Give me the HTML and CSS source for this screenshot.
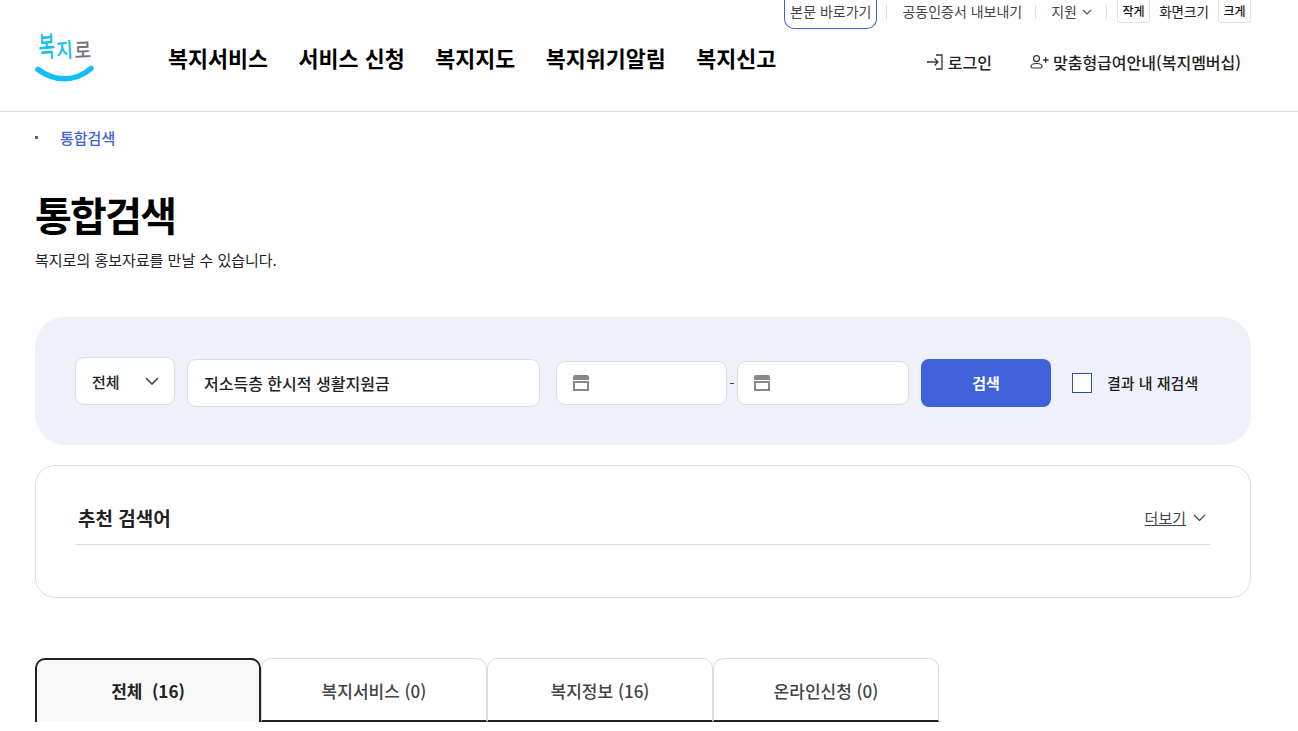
FILE: index.html
```html
<!DOCTYPE html>
<html lang="ko">
<head>
    <meta charset="utf-8">
    <title>통합검색 | 복지로</title>
    <link rel="stylesheet" href="styles.css">
</head>
<body>
<header class="site-header">
    <div class="util-bar">
        <a class="skip-link">본문 바로가기</a>
        <span class="util-sep"></span>
        <a class="util-link">공동인증서 내보내기</a>
        <span class="util-sep util-sep-wide"></span>
        <a class="util-link util-support">지원
            <svg width="10" height="6" viewBox="0 0 10 6"><path d="M1 1l4 4 4-4" fill="none" stroke="#555" stroke-width="1.2"/></svg>
        </a>
        <span class="util-sep util-sep-last"></span>
        <button class="size-btn">작게</button>
        <span class="size-label">화면크기</span>
        <button class="size-btn">크게</button>
    </div>
    <div class="main-bar">
        <a class="logo">
            <span class="logo-text"><span class="logo-bok">복</span><span class="logo-ji">지</span><span class="logo-ro">로</span></span>
            <svg class="logo-smile" width="60" height="18" viewBox="0 0 60 18"><path d="M3 4.500C20 17 40 17 56 3.500" fill="none" stroke="#14bdf2" stroke-width="5.500" stroke-linecap="round"/></svg>
        </a>
        <nav class="gnb">
            <a>복지서비스</a>
            <a>서비스 신청</a>
            <a>복지지도</a>
            <a>복지위기알림</a>
            <a>복지신고</a>
        </nav>
        <div class="member-links">
            <a class="member-link">
                <svg width="18" height="16" viewBox="0 0 18 16"><path d="M1 8h11M8.500 4.500L12 8l-3.500 3.500M10 1h6v14h-6" fill="none" stroke="#333" stroke-width="1.300"/></svg>
                로그인
            </a>
            <a class="member-link">
                <svg width="19" height="14" viewBox="0 0 19 14"><circle cx="6.500" cy="3.600" r="3" fill="none" stroke="#333" stroke-width="1.200"/><path d="M1 11.500c0-2 2.500-3 5.500-3s5.500 1 5.500 3c0 1-.7 1.500-1.500 1.500h-8C1.700 13 1 12.500 1 11.500z" fill="none" stroke="#333" stroke-width="1.200"/><path d="M13 5h5.500M15.700 2.300v5.500" stroke="#333" stroke-width="1.400"/></svg>
                맞춤형급여안내(복지멤버십)
            </a>
        </div>
    </div>
</header>

<main class="content">
    <div class="breadcrumb">
        <span class="crumb-dot"></span>
        <a class="crumb-current">통합검색</a>
    </div>

    <h1 class="page-title">통합검색</h1>
    <p class="page-desc">복지로의 홍보자료를 만날 수 있습니다.</p>

    <form class="search-panel">
        <div class="field field-select">
            <span>전체</span>
            <svg width="14" height="8" viewBox="0 0 14 8"><path d="M1 1l6 6 6-6" fill="none" stroke="#444" stroke-width="1.600"/></svg>
        </div>
        <div class="field field-keyword">저소득층 한시적 생활지원금</div>
        <div class="date-range">
            <div class="field field-date">
                <svg width="16" height="16" viewBox="0 0 16 16"><path d="M0 2a2 2 0 0 1 2-2h12a2 2 0 0 1 2 2v3H0z" fill="#888"/><rect x="1" y="7" width="14" height="8" fill="none" stroke="#888" stroke-width="2"/></svg>
            </div>
            <span class="date-dash">-</span>
            <div class="field field-date">
                <svg width="16" height="16" viewBox="0 0 16 16"><path d="M0 2a2 2 0 0 1 2-2h12a2 2 0 0 1 2 2v3H0z" fill="#888"/><rect x="1" y="7" width="14" height="8" fill="none" stroke="#888" stroke-width="2"/></svg>
            </div>
        </div>
        <button type="button" class="search-btn">검색</button>
        <label class="research">
            <span class="research-box"></span>
            결과 내 재검색
        </label>
    </form>

    <section class="recommend">
        <div class="recommend-head">
            <h2>추천 검색어</h2>
            <a class="more-link"><span>더보기</span>
                <svg width="13" height="8" viewBox="0 0 13 8"><path d="M1 1l5.500 5.500L12 1" fill="none" stroke="#444" stroke-width="1.200"/></svg>
            </a>
        </div>
    </section>

    <div class="tabs">
        <a class="tab tab-active">전체&nbsp; (16)</a>
        <a class="tab">복지서비스 (0)</a>
        <a class="tab">복지정보 (16)</a>
        <a class="tab">온라인신청 (0)</a>
    </div>
</main>
</body>
</html>
```

FILE: styles.css
```css
/* Page */
html, body {
    margin: 0;
    padding: 0;
    height: 731px;
    overflow: hidden;
    background-color: #fff;
}

body {
    font-family: "Noto Sans CJK KR", "Noto Sans", sans-serif;
    color: #111;
}

/* Header */
.site-header {
    height: 111px;
    border-bottom: 1px solid #ddd;
    box-sizing: content-box;
}

.util-bar {
    display: flex;
    justify-content: flex-end;
    align-items: flex-start;
    height: 29px;
    padding-right: 47px;
    font-size: 14px;
    line-height: 23px;
    color: #444;
}

.skip-link {
    width: 93px;
    height: 29px;
    box-sizing: border-box;
    border: 1px solid #3f62d9;
    border-top: none;
    border-radius: 0 0 10px 10px;
    text-align: center;
}

.util-sep {
    width: 1px;
    height: 14px;
    margin: 5px 15px 0 9px;
    background-color: #ddd;
}

.util-sep-wide {
    margin-left: 13px;
}

.util-sep-last {
    margin-left: 14px;
    margin-right: 10px;
}

.util-link {
    display: flex;
    align-items: center;
    height: 23px;
}

.util-support svg {
    margin-left: 5px;
}

.size-btn {
    width: 33px;
    height: 23px;
    margin: 0;
    padding: 0;
    border: 1px solid #e2e2e2;
    border-top: none;
    border-radius: 0 0 3px 3px;
    background-color: #fff;
    font-family: inherit;
    font-size: 12px;
    font-weight: 500;
    line-height: 22px;
    color: #111;
}

.size-label {
    width: 68px;
    font-size: 13.5px;
    text-align: center;
    color: #222;
}

.main-bar {
    display: flex;
    align-items: flex-start;
    height: 82px;
    padding: 0 47px 0 35px;
}

/* Logo */
.logo {
    position: relative;
    display: block;
    width: 133px;
    height: 60px;
    flex-shrink: 0;
}

.logo-text {
    position: absolute;
    top: 3px;
    left: 3px;
    display: flex;
    align-items: flex-end;
    height: 28px;
    font-size: 20px;
    line-height: 20px;
    white-space: nowrap;
}

.logo-bok,
.logo-ji,
.logo-ro {
    display: block;
    width: 18px;
    font-weight: 500;
    transform-origin: 50% 100%;
}

.logo-bok {
    color: #14bdf2;
    transform: scale(0.9, 1.45) rotate(-3deg);
}

.logo-ji {
    color: #14bdf2;
    transform: scale(0.9, 1.05) rotate(-4deg);
}

.logo-ro {
    color: #6f7480;
    transform: scale(0.9, 1.05) rotate(-2deg);
}

.logo-smile {
    position: absolute;
    top: 36px;
    left: 0;
}

/* Main nav */
.gnb {
    display: flex;
    gap: 30.5px;
    padding-top: 12px;
    font-size: 21.75px;
    line-height: 34px;
    font-weight: 700;
    color: #000;
}

.member-links {
    display: flex;
    gap: 38px;
    margin-left: auto;
    margin-right: 10px;
    padding-top: 20px;
    font-size: 16px;
    line-height: 26px;
    font-weight: 500;
    color: #222;
}

.member-link {
    display: flex;
    align-items: center;
    gap: 4px;
}

/* Content */
.content {
    padding: 0 47px 0 35px;
}

.breadcrumb {
    display: flex;
    align-items: center;
    height: 50px;
    font-size: 15px;
    font-weight: 500;
    color: #3f62d9;
}

.crumb-dot {
    width: 3px;
    height: 3px;
    margin-right: 22px;
    background-color: #666;
}

.page-title {
    margin: 22px 0 0;
    font-size: 40px;
    line-height: 60px;
    font-weight: 700;
    color: #000;
    letter-spacing: -1.7px;
}

.page-desc {
    margin: 4px 0 0;
    font-size: 15px;
    line-height: 24px;
    color: #222;
}

/* Search panel */
.search-panel {
    display: flex;
    align-items: center;
    height: 128px;
    margin-top: 45px;
    padding: 4px 40px 0;
    box-sizing: border-box;
    border-radius: 30px;
    background-color: #eef1fa;
}

.field {
    display: flex;
    align-items: center;
    box-sizing: border-box;
    border: 1px solid #ddd;
    border-radius: 9px;
    background-color: #fff;
    font-size: 15px;
    font-weight: 500;
    color: #222;
}

.field-select {
    justify-content: space-between;
    width: 100px;
    height: 48px;
    margin: 0 12px 4px 0;
    padding: 0 15px 0 16px;
}

.field-keyword {
    width: 353px;
    height: 48px;
    padding: 0 0 1px 16px;
    font-size: 16px;
}

.date-range {
    display: flex;
    align-items: center;
    margin-left: 16px;
}

.field-date {
    width: 171px;
    height: 44px;
    padding-left: 16px;
}

.date-range .field-date + .date-dash + .field-date {
    width: 172px;
}

.date-dash {
    width: 10px;
    font-size: 14px;
    color: #333;
    text-align: center;
}

.search-btn {
    width: 130px;
    height: 48px;
    margin: 0 0 0 12px;
    padding: 0 0 1px;
    border: none;
    border-radius: 8px;
    background-color: #3f62d9;
    font-family: inherit;
    font-size: 15px;
    font-weight: 700;
    color: #fff;
}

.research {
    display: flex;
    align-items: center;
    margin-left: 21px;
    font-size: 15px;
    font-weight: 500;
    line-height: 20px;
    color: #222;
}

.research-box {
    width: 20px;
    height: 20px;
    margin-right: 15px;
    box-sizing: border-box;
    border: 1px solid #2f4f9e;
    background-color: #fff;
}

/* Recommended keywords */
.recommend {
    height: 133px;
    margin-top: 20px;
    padding: 0 40px;
    box-sizing: border-box;
    border: 1px solid #ddd;
    border-radius: 20px;
}

.recommend-head {
    display: flex;
    justify-content: space-between;
    align-items: center;
    box-sizing: border-box;
    height: 79px;
    padding: 25px 4px 0 2px;
    border-bottom: 1px solid #ddd;
}

.recommend-head h2 {
    margin: 0;
    font-size: 19px;
    font-weight: 700;
    color: #222;
}

.more-link {
    display: flex;
    align-items: center;
    gap: 7px;
    font-size: 15px;
    color: #444;
}

.more-link span {
    text-decoration: underline;
}

/* Tabs */
.tabs {
    display: flex;
    margin-top: 60px;
}

.tab {
    display: flex;
    justify-content: center;
    align-items: center;
    width: 226px;
    height: 64px;
    padding-top: 1px;
    box-sizing: border-box;
    border: 1px solid #ddd;
    border-bottom: 2px solid #222;
    border-radius: 10px 10px 0 0;
    font-size: 17px;
    font-weight: 500;
    color: #444;
}

.tab-active {
    padding: 0 0 2px;
    border: 2px solid #222;
    border-bottom: none;
    background-color: #f8f8f8;
    font-weight: 700;
    color: #222;
}
```
